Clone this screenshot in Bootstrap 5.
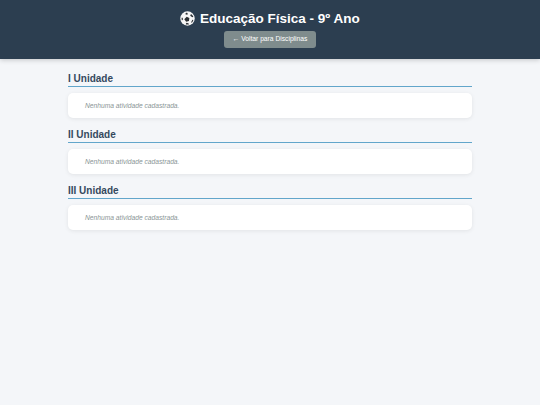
<!DOCTYPE html>
<html lang="pt-BR">
<head>
<meta charset="utf-8">
<title>Educação Física - 9º Ano</title>
<link href="https://cdn.jsdelivr.net/npm/bootstrap@5.3.0/dist/css/bootstrap.min.css" rel="stylesheet">
<style>
html,body{height:100%}
body{background:#f4f6f9;font-family:"Liberation Sans",Arial,sans-serif;overflow:hidden}
.topo{background:#2c3e50;height:59px;padding-top:10px;box-shadow:0 1px 5px rgba(0,0,0,.2)}
.titulo{font-size:13.5px;line-height:17px;font-weight:700;color:#fff;margin:0 0 4px}
.bola{width:15px;height:15px;vertical-align:-3px;margin-right:1px}
.voltar{background:#7f8c8d;color:#fff;font-size:6.7px;line-height:10px;padding:3px 0;border-radius:3px;border:0;height:17px;width:92px;vertical-align:top;white-space:nowrap}
.voltar:hover{background:#7f8c8d;color:#fff}
.miolo{width:404px;margin:0 auto;padding-top:13px}
.unidade{margin-bottom:10px}
.nome{font-size:10px;line-height:13px;font-weight:700;color:#34495e;border-bottom:1px solid #62a6cb;padding-bottom:1px;margin:0 0 6px}
.caixa{background:#fff;border:0;border-radius:5px;box-shadow:0 1px 4px rgba(0,0,0,.08);height:25px;padding:0 17px}
.vazio{font-size:6.7px;font-style:italic;color:#8a9596;margin:0;line-height:25px}
</style>
</head>
<body>
<header class="topo text-center">
<h1 class="titulo"><svg class="bola" viewBox="0 0 28 28" aria-hidden="true"><circle cx="14" cy="14" r="13.500" fill="#f6f6f6"/><path d="M12.500 10.500l5 2.500-.8 5.500-5.200 1.500-3.500-4.500zM13 3l-3 1.500 1 2.500 4-.8zM20.500 5.500l-1.500 3.500 4 2.500 2-1c-.9-1.900-2.500-3.800-4.500-5zM3 12.500c-.2 1.800 0 3.400.7 5l1.800-1.500-.5-3.500zM25 17l-1.800-.6-2.200 4 .8 2c1.500-1.400 2.700-3.200 3.200-5.400zM11 25c2 .5 3.800.5 5.600 0l-.4-1.800-3.700-1.200-1.500 1.200z" fill="#2b2f33"/></svg> Educação Física - 9º Ano</h1>
<a href="#" class="btn voltar">← Voltar para Disciplinas</a>
</header>
<main class="miolo">
<section class="unidade"><h2 class="nome">I Unidade</h2><div class="card caixa"><p class="vazio">Nenhuma atividade cadastrada.</p></div></section>
<section class="unidade"><h2 class="nome">II Unidade</h2><div class="card caixa"><p class="vazio">Nenhuma atividade cadastrada.</p></div></section>
<section class="unidade"><h2 class="nome">III Unidade</h2><div class="card caixa"><p class="vazio">Nenhuma atividade cadastrada.</p></div></section>
</main>
<script src="https://cdn.jsdelivr.net/npm/bootstrap@5.3.0/dist/js/bootstrap.bundle.min.js"></script>
</body>
</html>
